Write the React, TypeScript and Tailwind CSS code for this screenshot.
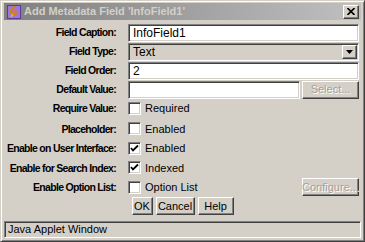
import React from 'react';

const FONT = { fontFamily: '"Liberation Sans", Arial, sans-serif' };

const sunken =
  'border border-t-[#808080] border-l-[#808080] border-b-white border-r-white shadow-[inset_1px_1px_0_#404040,inset_-1px_-1px_0_#d4d0c8]';
const raised =
  'border border-t-white border-l-white border-b-[#404040] border-r-[#404040] shadow-[inset_-1px_-1px_0_#808080]';

function Label({ children }: { children: React.ReactNode }) {
  return (
    <div className="text-right font-bold text-[10.5px] tracking-[-0.7px] whitespace-nowrap text-black leading-none pr-[3px]">
      {children}
    </div>
  );
}

function TextBox({ value, className = '' }: { value: string; className?: string }) {
  return (
    <div className={`h-[18px] bg-white ${sunken} flex items-center pl-[4px] text-[12px] text-black ${className}`}>
      {value}
    </div>
  );
}

function Check({ checked, label }: { checked?: boolean; label: string }) {
  return (
    <div className="flex items-center gap-[4px] text-[11px] text-black whitespace-nowrap">
      <div className={`w-[13px] h-[13px] bg-white ${sunken} flex items-center justify-center`}>
        {checked && (
          <svg width="9" height="9" viewBox="0 0 9 9">
            <path d="M1 4 L3 6.5 L8 1.5" stroke="#000" strokeWidth="1.8" fill="none" />
          </svg>
        )}
      </div>
      <span>{label}</span>
    </div>
  );
}

function Btn({ children, disabled, className = '' }: { children: React.ReactNode; disabled?: boolean; className?: string }) {
  return (
    <div
      className={`h-[18px] bg-[#d4d0c8] ${raised} flex items-center justify-center text-[11px] whitespace-nowrap ${
        disabled ? 'text-[#a0a0a0] [text-shadow:1px_1px_0_#fff]' : 'text-black'
      } ${className}`}
    >
      {children}
    </div>
  );
}

export default function App() {
  return (
    <div className="w-[365px] h-[242px] bg-[#d4d0c8] select-none" style={FONT}>
      <div className="w-full h-full border border-t-[#d4d0c8] border-l-[#d4d0c8] border-b-[#404040] border-r-[#404040] shadow-[inset_1px_1px_0_#fff,inset_-1px_-1px_0_#808080] p-[3px] pt-[2px] flex flex-col">
        {/* title bar */}
        <div className="h-[17px] bg-gradient-to-r from-[#808080] to-[#c0c0c0] flex items-center pl-[3px] pr-[2px] gap-[3px]">
          <svg width="14" height="14" viewBox="0 0 14 14">
            <rect x="0" y="0" width="14" height="14" fill="#9a7ad8" />
            <rect x="0.5" y="0.5" width="13" height="13" fill="none" stroke="#5a3a9a" />
            <path d="M9 2 C4 2 3 7 5 9 C7 11 10 9 9 7 C8 5 5 7 7 8" stroke="#e07a10" strokeWidth="2" fill="none" />
            <path d="M4 12 L6 9" stroke="#f0b030" strokeWidth="1.5" />
          </svg>
          <span className="font-bold text-[11px] text-[#d4d0c8] flex-1">Add Metadata Field 'InfoField1'</span>
          <div className={`w-[16px] h-[14px] bg-[#d4d0c8] ${raised} flex items-center justify-center`}>
            <svg width="8" height="7" viewBox="0 0 8 7">
              <path d="M0.5 0 L7.5 7 M7.5 0 L0.5 7" stroke="#000" strokeWidth="1.6" />
            </svg>
          </div>
        </div>

        {/* form */}
        <div className="grid grid-cols-[115px_1fr] gap-x-[9px] items-center pr-[2px] mt-[3px] auto-rows-[19px]">
          <Label>Field Caption:</Label>
          <TextBox value="InfoField1" />

          <Label>Field Type:</Label>
          <div className={`h-[18px] bg-[#d4d0c8] ${sunken} flex items-center pl-[4px] text-[12px] text-black`}>
            <span className="flex-1">Text</span>
            <div className={`w-[15px] h-[14px] mr-[1px] ${raised} flex items-center justify-center`}>
              <svg width="7" height="4" viewBox="0 0 7 4">
                <path d="M0 0 H7 L3.5 4 Z" fill="#000" />
              </svg>
            </div>
          </div>

          <Label>Field Order:</Label>
          <TextBox value="2" />

          <Label>Default Value:</Label>
          <div className="flex gap-[2px]">
            <TextBox value="" className="flex-1" />
            <Btn disabled className="w-[57px]">Select...</Btn>
          </div>

          <Label>Require Value:</Label>
          <Check label="Required" />
        </div>

        <div className="grid grid-cols-[115px_1fr] gap-x-[9px] items-center pr-[2px] mt-[1px] auto-rows-[19.5px]">
          <Label>Placeholder:</Label>
          <Check label="Enabled" />

          <Label>Enable on User Interface:</Label>
          <Check checked label="Enabled" />

          <Label>Enable for Search Index:</Label>
          <Check checked label="Indexed" />

          <Label>Enable Option List:</Label>
          <div className="flex items-center justify-between">
            <Check label="Option List" />
            <Btn disabled className="w-[57px]">Configure...</Btn>
          </div>
        </div>

        <div className="flex justify-center gap-[3px] mt-[0px]">
          <Btn className="w-[21px]">OK</Btn>
          <Btn className="w-[39px]">Cancel</Btn>
          <Btn className="w-[36px]">Help</Btn>
        </div>

        <div className={`mt-auto h-[17px] ${sunken} flex items-center pl-[3px] text-[11px] text-black`}>
          Java Applet Window
        </div>
      </div>
    </div>
  );
}
